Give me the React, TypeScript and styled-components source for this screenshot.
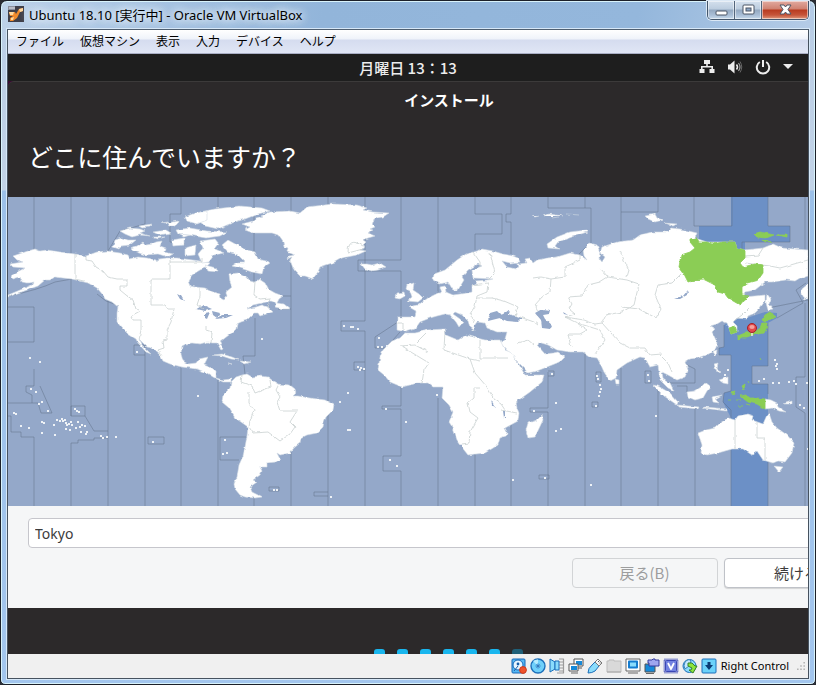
import React from "react";
import styled, { createGlobalStyle, css } from "styled-components";

const Global = createGlobalStyle`
  *, *::before, *::after { box-sizing: border-box; }
  html, body { margin: 0; background: #2a2c33; }
  body { font-family: "Noto Sans", "Noto Sans CJK JP", sans-serif; overflow: hidden; }
  button, input { font: inherit; }
`;

/* ---------- VirtualBox window frame ---------- */

const HostWindow = styled.div`
  min-height: 100vh;
  display: flex;
  flex-direction: column;
  padding: 0 6px 5px;
  border: 1px solid #1c2029;
  border-radius: 7px 7px 5px 5px;
  box-shadow: inset 0 0 0 1px #d9f3fb;
  background:
    linear-gradient(100deg, #bdd2e9 0, #a9c5e3 130px, #92b5da 320px, #94b7dc 630px, #b4cbe6 800px) top / 100% 29px no-repeat,
    linear-gradient(#b9cde5 0, #c2d3e7 189px, #9cc0e8 190px, #a3c6ee 100%);
`;

const TitleBar = styled.header`
  height: 28px;
  display: flex;
  align-items: flex-start;
  justify-content: space-between;
  padding-left: 1px;
`;

const TitleLabel = styled.div`
  display: flex;
  align-items: center;
  gap: 5px;
  height: 26px;
  color: #000;
  font-size: 13px;
  white-space: nowrap;
  text-shadow: 0 0 8px #fff, 0 0 8px #dceaf7, 0 0 12px #dceaf7;
`;

const Caption = styled.div`
  display: flex;
  border: 1px solid #43566c;
  border-top: 0;
  border-radius: 0 0 5px 5px;
  overflow: hidden;
  box-shadow: 0 0 0 1px #dbe8f5;
`;

const CaptionButton = styled.button<{ $close?: boolean }>`
  width: ${(p) => (p.$close ? 46 : 27)}px;
  height: 18px;
  display: grid;
  place-items: center;
  padding: 0;
  border: 0;
  border-right: ${(p) => (p.$close ? "0" : "1px solid #53657b")};
  box-shadow: inset 0 0 0 1px rgba(255, 255, 255, 0.5);
  background: ${(p) =>
    p.$close
      ? "linear-gradient(#e2aaa0 0, #cf8171 8px, #b83b20 9px, #c6553a 14px, #df9a7e 100%)"
      : "linear-gradient(#d4e0ed 0, #bccddf 8px, #94a9c1 9px, #a9bed6 14px, #c6d9eb 100%)"};
`;

const Client = styled.div`
  flex: 1;
  display: flex;
  flex-direction: column;
  border: 1px solid #46525f;
  border-top-color: #4f5f70;
  box-shadow: 0 0 0 1px #d7e8f8;
  overflow: hidden;
`;

const MenuBar = styled.nav`
  height: 24px;
  display: flex;
  align-items: center;
  gap: 16px;
  padding: 0 8px;
  border-bottom: 1px solid #a9aec4;
  background: linear-gradient(#fff 0, #eff3fa 9px, #d5dcef 10px, #e0e6f5 100%);
`;

const MenuItem = styled.button`
  padding: 0;
  border: 0;
  background: none;
  color: #000;
  font-size: 12px;
  line-height: 18px;
  white-space: nowrap;
`;

const StatusBar = styled.footer`
  height: 24px;
  display: flex;
  align-items: center;
  justify-content: flex-end;
  gap: 3px;
  padding-right: 3px;
  background: #f0f0f0;
  color: #000;
  white-space: nowrap;
`;

const HostKey = styled.span`
  margin: 0 5px 2px 1px;
  font-size: 11px;
`;

/* ---------- Ubuntu guest screen ---------- */

const TopBar = styled.div`
  height: 27px;
  display: grid;
  grid-template-columns: 1fr auto 1fr;
  align-items: center;
  background: #1e1e1e;
  color: #ededed;
`;

const Clock = styled.time`
  grid-column: 2;
  font-family: "Noto Sans CJK JP", sans-serif;
  font-size: 15px;
  font-weight: 500;
  line-height: 20px;
`;

const Tray = styled.div`
  display: flex;
  justify-content: flex-end;
  align-items: center;
  gap: 12px;
  padding: 0 15px 2px 0;
`;

/* The installer is wider than the visible part of the guest screen. */
const overhang = css`
  margin-right: -82px;
`;

const InstallerHeader = styled.header`
  ${overhang}
  height: 116px;
  border-top: 1px solid #3c3a3a;
  border-top-left-radius: 6px;
  background: #2c292a;
  color: #fff;
`;

const HeaderBackdrop = styled.div`
  background: #3a0a32;
`;

const InstallerTitle = styled.div`
  height: 34px;
  display: grid;
  place-items: center;
  font-family: "Noto Sans CJK JP", sans-serif;
  font-size: 15px;
  font-weight: 700;
`;

const Question = styled.h1`
  margin: 0;
  padding: 22px 20px 0;
  font-family: "Noto Sans CJK JP", sans-serif;
  font-size: 25px;
  font-weight: 400;
  line-height: 36px;
`;

const MapFrame = styled.div`
  height: 309px;
  background: #94a8c9;
`;

const MapSvg = styled.svg`
  display: block;
  width: 100%;
  height: 100%;
`;

const Form = styled.form`
  ${overhang}
  height: 102px;
  padding: 12px 20px;
  background: #f5f6f7;
  color: #3c3c3c;
  font-size: 15px;
`;

const CityInput = styled.input`
  display: block;
  width: 100%;
  height: 30px;
  padding: 0 6px;
  border: 1px solid #c6c6cc;
  border-radius: 4px;
  background: #fff;
  color: #3c3c3c;
  font-size: 14px;
  outline: none;
`;

const Actions = styled.div`
  display: flex;
  justify-content: flex-end;
  gap: 6px;
  margin-top: 10px;
`;

const ActionButton = styled.button`
  width: 146px;
  height: 30px;
  padding: 0 1px 0 0;
  border: 1px solid #bfc2c8;
  border-radius: 4px;
  background: #fff;
  box-shadow: 0 1px 1px rgba(0, 0, 0, 0.14);
  color: #3c3c3c;
  font-family: "Noto Sans CJK JP", sans-serif;
  line-height: 28px;
  &:disabled {
    border-color: #d2d4d6;
    background: #f5f6f7;
    box-shadow: none;
    color: #9c9d9e;
  }
`;

const Footer = styled.div`
  flex: 1;
  min-height: 46px;
  display: flex;
  align-items: flex-end;
  background: #2c292a;
`;

const Steps = styled.div`
  ${overhang}
  flex: 1;
  display: flex;
  justify-content: center;
  gap: 12px;
  padding-right: 2px;
`;

const Step = styled.span<{ $dim?: boolean }>`
  width: 11px;
  height: 5px;
  border-radius: 3px 3px 0 0;
  background: ${(p) => (p.$dim ? "#1f5f78" : "#19b6ee")};
`;

/* ---------- Map data ---------- */

const continents = [
  // North America
  "M13 256L22 253 28 251 35 249 40 251 47 250 60 252 75 254 86 256 97 252 107 251 120 253 128 255 130 259 138 257 147 258 156 260 157 262 158 259 167 258 177 258 185 259 200 261 210 263 205 268 200 270 192 275 188 281 190 286 195 287 205 288 213 292 219 294 220 298 224 300 227 296 226 292 232 287 230 282 229 274 238 273 243 276 247 277 250 281 255 282 259 279 265 283 268 289 275 293 283 296 279 299 277 303 284 304 290 309 283 309 275 307 276 303 271 301 262 303 253 305 247 309 256 307 262 305 268 307 270 309 273 312 260 316 258 313 254 313 247 320 241 322 237 324 236 329 233 332 225 338 220 342 223 349 221 350 217 343 212 343 207 342 200 344 192 343 186 344 182 346 181 354 183 361 188 364 196 363 199 359 208 357 204 365 212 368 216 371 216 378 223 380 231 379 231 382 223 382 213 377 207 373 197 369 182 367 170 364 163 361 160 355 152 348 147 347 139 339 142 345 151 354 146 352 138 343 136 339 128 334 122 328 117 322 117 313 118 307 112 302 105 299 103 295 97 288 88 283 80 281 72 279 63 278 55 277 50 280 45 280 38 286 27 290 8 297 8 295 20 290 32 285 34 282 28 283 22 282 20 277 13 279 11 276 17 272 25 268 13 267 10 264 23 262 17 260Z",
  // Greenland
  "M242 224L253 221 256 219 263 217 261 216 270 212 290 211 300 213 307 207 333 204 357 205 367 208 363 210 373 212 389 213 383 217 377 218 373 221 372 224 375 227 370 229 373 230 368 233 375 236 368 238 363 240 366 242 363 245 366 247 360 250 366 251 357 255 342 258 335 262 320 267 318 272 315 276 313 279 305 276 300 276 295 271 293 268 290 260 292 257 287 259 289 256 295 255 287 252 288 248 284 247 283 242 278 235 272 233 253 233 245 230 250 227Z",
  // Iceland
  "M361 264L367 264 372 265 380 263 386 267 378 270 372 271 365 269Z",
  // South America
  "M231 382L236 377 242 375 247 374 252 377 260 376 268 377 273 381 278 384 290 385 295 389 296 393 293 396 298 396 310 398 325 400 334 405 333 410 326 417 324 422 323 427 317 433 307 435 301 438 300 443 294 448 290 453 280 455 277 453 280 459 276 462 267 463 267 467 260 467 262 471 260 475 253 480 257 482 250 487 252 492 262 497 255 498 245 497 240 495 235 489 234 484 237 477 239 465 243 456 245 447 247 436 248 427 241 422 235 418 229 408 222 402 223 395 230 388Z",
  // Eurasia
  "M397 317L415 317 416 311 409 307 418 305 428 298 438 293 442 293 440 287 445 286 446 292 453 295 467 293 472 292 472 285 477 283 475 281 487 280 493 279 473 278 472 270 482 266 478 264 468 270 462 277 464 280 458 290 453 290 448 282 440 284 433 280 434 274 445 270 457 260 466 254 473 252 482 249 493 251 503 254 513 256 518 258 520 262 510 263 502 261 507 267 516 269 519 268 518 264 527 263 525 259 530 258 533 263 537 260 547 258 557 257 570 253 580 255 587 260 584 256 583 250 590 243 597 245 600 252 599 258 602 262 605 257 600 253 602 247 617 242 633 240 640 235 652 232 667 232 671 228 680 229 697 233 695 238 707 242 735 242 737 248 745 250 763 248 773 244 782 248 795 249 808 250 808 275 800 278 795 281 786 280 773 282 765 282 755 290 745 292 744 297 765 295 765 301 760 308 755 313 748 316 747 319 737 318 733 322 737 326 737 332 731 334 729 328 727 323 722 321 717 324 710 326 715 329 712 332 715 338 717 343 715 350 707 355 698 358 690 359 685 362 688 370 685 377 677 380 668 375 662 372 663 378 670 383 674 391 668 388 660 380 658 365 650 367 645 358 640 357 627 363 617 370 616 378 610 381 604 372 600 363 597 358 590 357 583 352 570 352 557 350 548 345 538 342 537 345 545 354 553 353 558 352 565 357 561 361 557 363 537 371 528 373 523 367 513 357 500 343 505 339 507 332 497 332 487 328 485 323 477 322 474 326 475 331 470 327 468 321 462 315 455 312 453 314 460 319 463 322 459 327 456 322 450 315 445 314 437 316 430 318 420 322 415 329 405 332 397 330Z",
  // Africa
  "M405 333L415 333 427 330 445 329 446 335 458 340 466 335 477 338 485 340 500 340 505 350 510 352 518 363 525 375 544 375 542 382 530 392 516 402 517 408 519 413 518 421 505 428 507 432 506 436 500 438 498 445 485 453 476 454 468 455 464 450 457 440 453 428 449 422 453 412 449 405 442 398 443 387 433 387 428 383 418 383 402 387 390 382 384 375 378 370 380 357 383 350 392 341 400 338Z",
  // Australia and Tasmania
  "M698 433L706 430 715 428 720 423 728 418 735 420 738 416 747 414 753 416 752 420 763 424 767 415 769 413 772 422 777 428 787 435 794 443 792 453 785 462 778 461 773 463 763 460 757 451 752 455 743 449 732 449 718 453 707 455 701 453 702 445Z",
  "M774 466L783 467 779 472Z",
];

const islands = [
  // Canadian Arctic
  "M115 240L122 238 128 240 136 240 130 245 121 246 119 249 113 247Z",
  "M130 248L137 246 143 242 146 245 152 244 156 242 162 241 160 246 166 248 165 252 173 254 168 257 158 254 145 255 133 251Z",
  "M120 231L130 228 140 229 145 231 140 233 150 236 140 235 132 237 125 234Z",
  "M139 226L152 224 149 227 142 228ZM153 232L166 230 171 233 159 235ZM167 223L178 221 176 226 169 226Z",
  "M172 240L184 238 184 245 173 246ZM185 248L196 245 195 255 185 256ZM161 222L168 221 165 223ZM152 237L165 237 158 239ZM178 234L190 235 184 237Z",
  "M200 212L215 209 240 206 262 208 270 211 258 214 245 219 235 222 227 225 218 229 205 226 200 222Z",
  "M185 217L195 213 207 211 207 220 197 224 187 221Z",
  "M176 230L190 228 207 231 227 232 220 236 206 238 189 235 178 234Z",
  "M222 245L228 240 237 245 247 250 255 252 258 259 266 261 270 263 264 267 262 274 252 272 240 268 232 266 238 262 245 262 238 255 228 252Z",
  "M200 241L215 239 219 244 215 249 224 253 214 255 209 262 202 263 198 254 203 248Z",
  "M205 265L216 268 218 272 208 271Z",
  // British Isles
  "M407 285L414 283 413 290 419 294 423 298 418 302 407 301 412 297 410 291 406 289Z",
  "M396 298L397 293 404 292 405 296 400 299Z",
  // Arctic Russia
  "M548 248L547 244 557 237 570 232 587 230 587 232 572 237 558 242 555 246 559 249Z",
  "M645 216L655 214 657 218 663 220 655 222 648 219ZM665 223L677 224 673 226Z",
  "M532 216L535 217 539 216M544 216L549 214 556 215 563 216M552 218L558 217M566 214L579 215",
  // Sakhalin and Kamchatka
  "M767 294L771 299 769 304 773 309 768 310 766 303Z",
  "M802 289L808 284 808 298 804 300 801 294Z",
  // Madagascar, Sri Lanka
  "M542 415L543 420 535 437 528 438 526 430 528 423 537 420Z",
  "M615 379L619 380 619 384 616 384Z",
  // South-East Asia
  "M653 385L658 386 670 393 678 402 677 405 664 396Z",
  "M678 405L689 406 699 407 698 409 679 407ZM702 408L727 411 727 409 705 407Z",
  "M687 392L695 391 701 387 705 383 710 387 707 391 703 398 695 400 688 397Z",
  "M712 397L722 395 715 399 719 403 713 402Z",
  "M714 364L718 363 717 370 721 372 717 373ZM719 380L728 377 728 384 723 383ZM713 352L717 351 716 356Z",
  "M765 399L771 400 777 403 778 407 786 412 779 411 773 408 765 409ZM783 404L792 401 792 404Z",
  // Caribbean
  "M213 355L222 354 232 357 239 360 231 359 222 356ZM240 361L251 362 244 364ZM228 363L232 364Z",
];

const selectedLand = [
  "M690 242L690 239 697 238 699 242 707 242 712 244 723 242 735 242 737 248 745 250 745 258 740 263 743 267 755 264 763 265 763 273 758 280 747 283 742 287 742 295 749 296 744 300 740 305 728 298 725 294 718 292 715 285 703 279 695 280 688 282 683 272 679 267 681 255 690 252 695 248Z",
  "M754 234L760 232 774 235 766 238 757 237ZM777 235L787 235 787 237ZM762 240L771 242 766 242Z",
  "M765 315L770 312 776 317 768 319 765 322 762 320Z",
  "M762 323L767 323 766 329 764 333 752 335 747 337 742 337 738 340 738 336 745 333 755 332 760 328Z",
  "M729 328L735 326 737 332 731 334Z",
  "M740 396L746 395 750 398 757 398 765 399 765 409 757 404 748 402Z",
  "M731 392L735 391 733 395ZM742 386L745 384 744 390ZM739 406L743 406M746 404L750 405M728 400L731 400M736 400L741 400M748 381L749 383M760 358L761 360",
];

const borders =
  "M75 254V279L88 282M86 256V260L92 261 96 267 103 271 108 277 117 279H127V286H120V290L126 295 133 300 136 309 140 311 131 316 133 320H141V330L139 339M170 260V279H151V305H165L168 309 174 309 171 322 167 330V340L163 341 164 348 158 350 162 356M170 262H202V258M200 288V296L197 305 203 309M206 326V331L212 333 211 343M255 282L254 295 260 299 270 298 268 308" +
  "M242 375L241 382 252 386 255 393 263 390 271 387 270 380M249 392L249 403 254 410 250 421 249 427 253 433 268 432 280 441 290 434 295 427 290 422 297 411H280L277 402 280 397 276 390 279 384" +
  "M363 246Q348 236 348 253L363 249M398 323H403V330M473 252L480 262 480 267M490 253L495 273 488 280M472 285L488 283 487 292 477 296 475 306 470 314 474 322M477 298L492 298 504 301 518 307 515 316M520 317L534 322 538 325M533 278L540 277 551 279 550 292 542 297 535 305 538 311M580 255L580 260 565 267 565 277 551 279M600 268L608 277 600 282 588 285 582 296 568 297 572 304 569 309 575 314 565 317 584 320 595 324 602 323 606 315 622 312 634 305 639 284 627 280 608 277M565 317L577 323 587 330 580 334 568 334 571 347M577 323L600 330 605 340 595 354M602 323L620 343 630 348 645 348 650 355 662 354M620 251L625 262 629 270 627 277M682 273L672 283 658 285 655 295 661 309 656 318 639 309 622 307M690 282L700 279M734 321L742 315 749 308M745 257L758 256 763 248M745 263L770 266 780 268 808 260M660 355L668 363 672 372" +
  "M400 346L415 345 428 352M427 332L416 343M445 331L444 350 470 359 480 361M480 340V358H508M470 359L475 373 487 387 494 399 501 404 505 410M480 388H474V398L468 403 470 412 478 418 474 425 470 432 469 443 462 444M401 346L429 363 424 370 422 383M518 343L528 340 534 345M501 410L517 413M735 420V449M757 422V438H765V460";

const zoneLines =
  "M34 197V250M71 197V254M108 197V252M145 197V224L120 231 108 251M181 197V214H170V242L185 244M254 197V282M291 197V506M328 197V506M365 197V321H341V331H365V506M218 197V210M401 197V260H358V271H401V320L375 337V348H386L400 332" +
  "M438 197V293M475 197V214H502V234H475V250M511 197V214H506V222H511V254M548 197V208H591V243L579 254V258M585 197V208M621 197V212H658V197M621 212V241M694 197V226H732V197M768 197V226H790V242H742V250M805 197V250" +
  "M8 307H34V342H8M34 369V386H26V392L32 395V403H8M40 386L52 413H41L38 403H32M8 416H11V432H21V437H34V506M71 279V416H71V406H85V416L94 431H108V438H94V440H78V443H71V506M71 416H85M108 300V431M108 438V506M145 355V506M134 345H145V355H134ZM181 367V506M148 437H164V444H148ZM218 380V506M220 437H246M220 437V460H239M255 318V356H243L245 374M254 498V506" +
  "M8 296Q38 290 55 282L72 279M97 294L106 301 120 306M283 296H291M278 309H291M269 487H279V491H269ZM328 492H314V496H328M365 362H354V370H365M401 387V406H382V409H401V456H383V471H401V506M438 398V506M475 454V506M511 424V506M548 372V408H530V412H548V506M548 371H554V376H548M539 475H549V479H539ZM585 353V506M596 372H601V382H596ZM592 402H598V407H592Z" +
  "M621 368V506M645 371H651V383H645ZM658 385V506M685 364L695 369V383H663M695 407V506M677 386H687V392M768 308L808 300M777 318L803 303 796 290 806 283M805 303V377H796V407L805 413V506M768 323V366H752V384H768V394M768 460V506M731 450V506M731 418V410L723 402 724 393 731 391V355H719V348L724 347V325";

const dots: Array<[number, number]> = [
  [29, 357], [39, 361], [30, 388], [35, 391], [41, 401], [38, 403], [47, 410], [13, 412], [15, 413], [20, 425], [28, 427], [41, 421], [43, 422], [53, 424], [41, 432], [54, 434],
  [56, 419], [59, 420], [62, 420], [61, 418], [64, 419], [65, 422], [68, 423], [70, 421], [71, 424], [66, 424], [75, 427], [77, 421], [79, 426], [80, 431], [69, 429], [65, 428], [84, 425], [86, 431], [85, 433], [81, 424],
  [74, 408], [76, 410], [78, 411], [100, 435], [102, 437], [106, 436], [115, 436], [152, 441], [136, 351], [197, 395], [261, 338], [343, 325], [350, 326], [352, 326], [357, 328], [378, 337], [377, 346], [381, 346], [386, 345],
  [357, 366], [360, 367], [363, 368], [359, 369], [347, 392], [339, 401], [347, 429], [349, 429], [385, 408], [405, 421], [389, 459], [396, 465], [224, 439], [222, 453], [226, 452], [273, 489], [276, 489], [330, 496],
  [436, 394], [455, 289], [551, 373], [533, 410], [555, 402], [555, 430], [560, 428], [512, 479], [544, 477], [590, 484], [596, 375], [597, 378], [599, 384], [600, 388], [599, 391], [598, 395], [595, 405], [655, 415], [647, 374], [648, 380],
  [774, 359], [776, 363], [776, 368], [775, 365], [758, 380], [763, 378], [772, 382], [778, 382], [788, 381], [793, 380], [795, 383], [806, 382], [799, 404], [803, 407], [807, 448], [727, 369], [724, 374],
];

const water = [
  "M177 294L181 296 184 301 180 299Z",
  "M195 310L203 305 212 309 205 311 197 309ZM205 313L210 312 207 319 205 318ZM212 311L220 313 217 318 213 315ZM215 319L222 315 233 315 226 318Z",
  "M488 321L490 313 497 311 501 315 505 313 510 309 509 314 522 318 518 322 507 321 500 318Z",
  "M535 313L542 309 550 310 549 314 543 315 545 319 552 325 550 329 542 328 541 320Z",
  "M674 299L683 296 688 290 687 295 680 299ZM491 400L496 408 492 405ZM503 411L505 411V418H504ZM563 312L568 315 564 314Z",
];

function WorldMap() {
  return (
    <MapSvg viewBox="8 197 800 309" preserveAspectRatio="xMinYMid slice" role="img" aria-label="タイムゾーン">
      <defs>
        <filter id="coast" x="0" y="0" width="1" height="1" filterUnits="objectBoundingBox">
          <feTurbulence type="fractalNoise" baseFrequency="0.14 0.24" numOctaves="2" seed="4" result="n" />
          <feDisplacementMap in="SourceGraphic" in2="n" scale="3" xChannelSelector="R" yChannelSelector="G" />
        </filter>
      </defs>
      <rect x="8" y="197" width="800" height="309" fill="#94a8c9" />
      <path
        d="M731 197H768V226H790V242H745V260H699V226H731ZM724 325L733 319 747 318 765 312 777 313V318L768 323V366H752V384H768V430H731V418L723 402 724 393 731 391V355H719V348L724 347ZM731 440H768V506H731Z"
        fill="#6c90c6"
      />
      <path d={zoneLines} fill="none" stroke="#5f6f88" strokeOpacity="0.5" strokeWidth="1" />
      <g filter="url(#coast)">
        <path d="M8 197H808V506H8Z" fill="none" />
        <g fill="#fff" stroke="#d3dbe4" strokeWidth="0.6" strokeLinejoin="round">
          {continents.map((d) => <path key={d} d={d} />)}
          {islands.map((d) => <path key={d} d={d} />)}
        </g>
        <g fill="#94a8c9">{water.map((d) => <path key={d} d={d} />)}</g>
        <path d={borders} fill="none" stroke="#c9d0d0" strokeWidth="0.8" />
        <g fill="#8bcd55" stroke="#8bcd55" strokeWidth="0.8">
          {selectedLand.map((d) => <path key={d} d={d} />)}
        </g>
      </g>
      <g fill="#eef2f6">
        {dots.map(([x, y]) => <rect key={`${x}-${y}`} x={x} y={y} width="2" height="2" />)}
      </g>
      <path d="M752 331V336" stroke="#e6e6dd" strokeWidth="1.6" />
      <circle cx="752" cy="328" r="4.5" fill="#e34a4c" stroke="#a51f27" />
      <ellipse cx="752" cy="327" rx="2.6" ry="2" fill="#f4a09d" />
    </MapSvg>
  );
}

/* ---------- Icons ---------- */

const AppIcon = () => (
  <svg width="16" height="16" viewBox="0 0 16 16">
    <rect width="16" height="16" fill="#3f3f49" />
    <path d="M0 0H7V4H0Z" fill="#8b909e" />
    <path d="M2 1V3M4 1V3M6 1V3" stroke="#e8e9ee" />
    <path d="M1 6H7L8 8 11 3 15 2V5L12 6 9 12 5 15H2V12L5 10H2Z" fill="#f08a2c" />
    <path d="M1 6H6L5 9H2ZM11 3L15 2V5L12 6ZM3 12L6 11 5 14H3Z" fill="#ffd9a0" />
  </svg>
);

const NetworkIcon = () => (
  <svg width="16" height="14" viewBox="0 0 16 14" fill="#ededed">
    <path d="M5 0H11V4H8.8V6H14V9H15.5V13H10.5V9H12.4V7.4H3.6V9H5.5V13H.5V9H2V6H7.2V4H5Z" />
  </svg>
);

const SoundIcon = () => (
  <svg width="16" height="14" viewBox="0 0 16 14" fill="none">
    <path d="M1 4.500H3L7.500 0.500V13.500L3 9.500H1Z" fill="#ededed" />
    <path d="M9.500 4.500Q11.500 7 9.500 9.500" stroke="#ededed" strokeWidth="1.5" />
    <path d="M11.500 3Q14.500 7 11.500 11" stroke="#a5a5a5" strokeWidth="1.2" />
    <path d="M13 1.500Q16.500 7 13 12.500" stroke="#666" />
  </svg>
);

const PowerIcon = () => (
  <svg width="16" height="16" viewBox="0 0 16 16" fill="none" stroke="#ededed" strokeWidth="2">
    <path d="M4.8 3A6.2 6.2 0 1 0 11.2 3M8 1V8" />
  </svg>
);

const CaretIcon = () => (
  <svg width="10" height="5" viewBox="0 0 10 5"><path d="M0 0H10L5 5Z" fill="#ededed" /></svg>
);

const StatusSvg = ({ children }: { children: React.ReactNode }) => (
  <svg width="16" height="16" viewBox="0 0 16 16" strokeWidth="1" strokeLinejoin="round">{children}</svg>
);

const statusIcons = [
  <StatusSvg key="disk">
    <rect x="1" y="1" width="13" height="14" rx="1" fill="#55b8f4" stroke="#1667b8" />
    <circle cx="7" cy="7" r="5" fill="#e8f6ff" stroke="#1667b8" />
    <circle cx="7" cy="6" r="1.4" fill="#155ca9" /><path d="M3 13L7 8" stroke="#155ca9" />
    <circle cx="12" cy="12" r="3.4" fill="#f0532c" stroke="#cb3a1c" />
  </StatusSvg>,
  <StatusSvg key="disc">
    <circle cx="8" cy="8" r="7" fill="#6fd0fa" stroke="#1c6fba" strokeWidth="1.4" />
    <path d="M8 8L3 3A7 7 0 0 1 8 1.5Z" fill="#b5ecff" />
    <circle cx="8" cy="8" r="2" fill="#9ddcf8" stroke="#3a92d4" /><circle cx="8" cy="8" r="1" fill="#155ca9" />
  </StatusSvg>,
  <StatusSvg key="audio">
    <path d="M10 1H14.5V15H8M10 4H14M10 7H14M10 10H14M10 13H14" fill="none" stroke="#9b9b9b" strokeWidth="1.2" />
    <path d="M1 1V14L6 11V4Z" fill="#8adcfc" stroke="#1c6fba" />
    <path d="M6 3H10V12H6Z" fill="#8adcfc" stroke="#1c6fba" />
  </StatusSvg>,
  <StatusSvg key="network">
    <rect x="6" y="1" width="9" height="7" fill="#fff" stroke="#555" /><rect x="8" y="3" width="6" height="4" fill="#1689d8" />
    <path d="M9 10H14" stroke="#555" />
    <rect x="1" y="6" width="9" height="7" fill="#fff" stroke="#555" /><rect x="3" y="8" width="6" height="4" fill="#1689d8" />
    <path d="M3 15H10" stroke="#666" />
  </StatusSvg>,
  <StatusSvg key="usb">
    <path d="M1 15Q1 10 5 7L8 4 12 8 8 13Q5 15 1 15Z" fill="#8adcfc" stroke="#1c6fba" />
    <path d="M8 4L11 1 15 5 12 8Z" fill="#f5f5f5" stroke="#777" /><path d="M11 3.5H12M12.5 5H13.5" stroke="#555" />
  </StatusSvg>,
  <StatusSvg key="folder">
    <path d="M1 3H3V2H8V3H15V14H1Z" fill="#d9d9d9" stroke="#bdbdbd" /><path d="M1 14H15" stroke="#a8a8a8" />
  </StatusSvg>,
  <StatusSvg key="display">
    <rect x="1" y="1" width="14" height="12" fill="#fff" stroke="#666" />
    <rect x="4" y="3.5" width="8" height="6" fill="#8adcfc" stroke="#137cd0" strokeWidth="2" /><path d="M3 15H13" stroke="#666" />
  </StatusSvg>,
  <StatusSvg key="capture">
    <path d="M1 6H11V14H1Z" fill="#1689d8" stroke="#555" />
    <path d="M4 2H8L9 1H11V2H15V8H5V5H4Z" fill="#9fa6ef" stroke="#353b9c" /><path d="M2 15.5H10" stroke="#666" />
  </StatusSvg>,
  <StatusSvg key="cpu">
    <rect x="1.5" y="1.5" width="13" height="13" fill="none" stroke="#3a47b5" strokeWidth="2" strokeDasharray="1 1" />
    <rect x="2.5" y="2.5" width="11" height="11" rx="1" fill="#7282e0" stroke="#3a47b5" />
    <path d="M5 5L8 11 11 5" fill="none" stroke="#fff" strokeWidth="1.8" />
  </StatusSvg>,
  <StatusSvg key="mouse">
    <circle cx="7.5" cy="8" r="6.5" fill="#8adcfc" stroke="#1c6fba" />
    <path d="M3 4Q7 0 9 3L7 8 3 11Q1 8 3 4Z" fill="#c5e8ff" stroke="#3b86b9" />
    <path d="M6 5H10L13 8 15 8 11 15 7 12H9L10 10 6 8Z" fill="#8be53c" stroke="#37802a" />
  </StatusSvg>,
  <StatusSvg key="host">
    <rect x="1" y="1" width="14" height="14" rx="1" fill="#6bd2fa" stroke="#1c6fba" />
    <path d="M6.5 4H9.5V7H12L8 12 4 7H6.5Z" fill="#0b3c74" />
  </StatusSvg>,
];

const menus = ["ファイル", "仮想マシン", "表示", "入力", "デバイス", "ヘルプ"];

export default function App() {
  return (
    <>
      <Global />
      <HostWindow>
        <TitleBar>
          <TitleLabel><AppIcon /><span>Ubuntu 18.10 [実行中] - Oracle VM VirtualBox</span></TitleLabel>
          <Caption>
            <CaptionButton aria-label="最小化">
              <svg width="13" height="12"><rect x="1" y="7" width="11" height="4" rx="1" fill="#fff" stroke="#4b5565" /></svg>
            </CaptionButton>
            <CaptionButton aria-label="最大化">
              <svg width="13" height="12"><rect x="1" y="1" width="11" height="9" rx="1" fill="#fff" stroke="#4b5565" /><rect x="4" y="4" width="5" height="3" fill="#8ba5c4" stroke="#4b5565" /></svg>
            </CaptionButton>
            <CaptionButton $close aria-label="閉じる">
              <svg width="13" height="12" fill="#fff" stroke="#4b5565"><path d="M1 1H5L6.5 3 8 1H12L9 5.5 12 10H8L6.5 8 5 10H1L4 5.5Z" /></svg>
            </CaptionButton>
          </Caption>
        </TitleBar>
        <Client>
          <MenuBar>{menus.map((m) => <MenuItem key={m}>{m}</MenuItem>)}</MenuBar>
          <TopBar>
            <Clock>月曜日 13：13</Clock>
            <Tray><NetworkIcon /><SoundIcon /><PowerIcon /><CaretIcon /></Tray>
          </TopBar>
          <HeaderBackdrop>
            <InstallerHeader>
              <InstallerTitle>インストール</InstallerTitle>
              <Question>どこに住んでいますか？</Question>
            </InstallerHeader>
          </HeaderBackdrop>
          <MapFrame><WorldMap /></MapFrame>
          <Form onSubmit={(e) => e.preventDefault()}>
            <CityInput aria-label="都市" defaultValue="Tokyo" />
            <Actions>
              <ActionButton type="button" disabled>戻る(B)</ActionButton>
              <ActionButton type="submit">続ける</ActionButton>
            </Actions>
          </Form>
          <Footer>
            <Steps>{[0, 1, 2, 3, 4, 5, 6].map((n) => <Step key={n} $dim={n === 6} />)}</Steps>
          </Footer>
          <StatusBar>
            {statusIcons}
            <HostKey>Right Control</HostKey>
            <svg width="8" height="8" viewBox="0 0 10 10" fill="#b5b5b5">
              <path d="M8 0H10V2H8ZM4 4H6V6H4ZM8 4H10V6H8ZM0 8H2V10H0ZM4 8H6V10H4ZM8 8H10V10H8Z" />
            </svg>
          </StatusBar>
        </Client>
      </HostWindow>
    </>
  );
}
